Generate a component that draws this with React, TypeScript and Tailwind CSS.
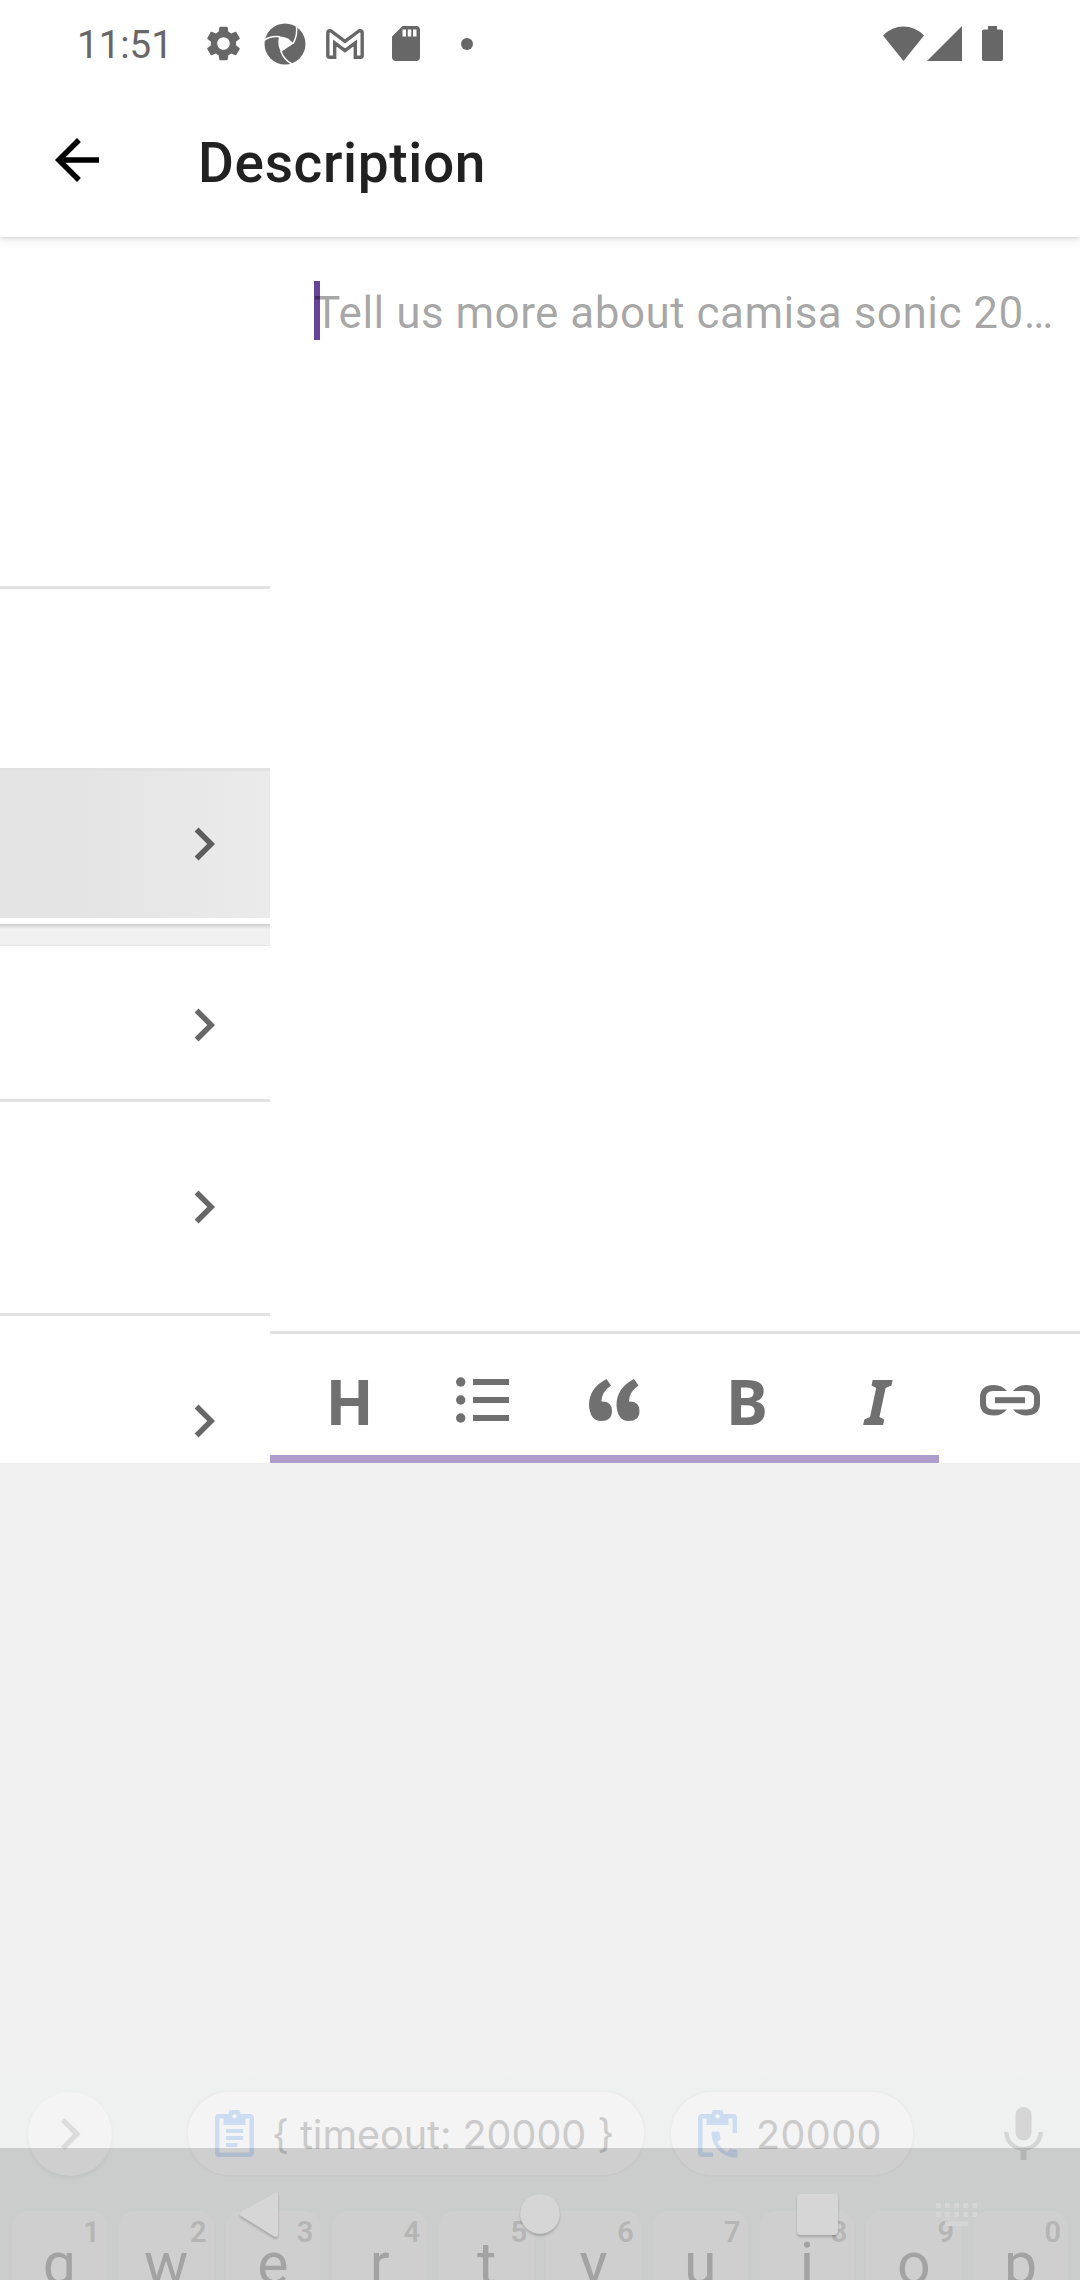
import type { ReactNode } from "react";

function Glyph({ box, className, children }: { box: string; className: string; children: ReactNode }) {
  return (
    <svg viewBox={box} className={`block shrink-0 fill-current ${className}`}>
      {children}
    </svg>
  );
}

function Chevron({ className }: { className: string }) {
  return (
    <Glyph box="0 0 24 24" className={className}>
      <path d="M10 6 8.59 7.41 13.17 12l-4.58 4.59L10 18l6-6z" />
    </Glyph>
  );
}

function StatusBar() {
  return (
    <div className="flex h-[87px] items-center pr-[77px] pl-[77px] text-[#676767]">
      <span className="w-[126px] pt-[3px] text-[38.5px] leading-none">11:51</span>
      <Glyph box="2 2 20 20" className="h-[35px] w-[41px]">
        <path d="M19.14 12.94c.04-.3.06-.61.06-.94 0-.32-.02-.64-.07-.94l2.03-1.58c.18-.14.23-.41.12-.61l-1.92-3.32c-.12-.22-.37-.29-.59-.22l-2.39.96c-.5-.38-1.03-.7-1.62-.94l-.36-2.54c-.04-.24-.24-.41-.48-.41h-3.84c-.24 0-.43.17-.47.41l-.36 2.54c-.59.24-1.13.57-1.62.94l-2.39-.96c-.22-.08-.47 0-.59.22L2.74 8.87c-.12.21-.08.47.12.61l2.03 1.58c-.05.3-.09.63-.09.94s.02.64.07.94l-2.03 1.58c-.18.14-.23.41-.12.61l1.92 3.32c.12.22.37.29.59.22l2.39-.96c.5.38 1.03.7 1.62.94l.36 2.54c.05.24.24.41.48.41h3.84c.24 0 .44-.17.47-.41l.36-2.54c.59-.24 1.13-.56 1.62-.94l2.39.96c.22.08.47 0 .59-.22l1.92-3.32c.12-.22.07-.47-.12-.61l-2.01-1.58zM12 15.6c-1.98 0-3.6-1.62-3.6-3.6s1.62-3.6 3.6-3.6 3.6 1.62 3.6 3.6-1.62 3.6-3.6 3.6z" />
      </Glyph>
      <Glyph box="0 0 42 42" className="ml-5 h-[42px] w-[42px]">
        <circle cx="21" cy="21" r="20.5" />
        <path d="M15 13.500Q23.500 13 29.500 20.500L17 29Q13 22 15 13.500z" fill="white" />
        <path d="M0 17.500Q6 12.500 16 13.800M32.500 4Q33.500 13 29 20.500M16.800 28Q20 37 28 41" fill="none" stroke="white" strokeWidth="1.500" />
      </Glyph>
      <Glyph box="0 0 38 30" className="ml-5 h-[30px] w-[38px]">
        <path d="M1.800 4v22.500q0 1.700 1.700 1.700h5.200V14L19 21.700 29.300 14v14.200h5.200q1.700 0 1.700-1.700V4q0-2.200-2.200-2.200-1 0-1.800.7L19 12.400 5.800 2.500Q5 1.800 4 1.800 1.800 1.800 1.800 4z" fill="none" stroke="currentColor" strokeWidth="3.400" />
      </Glyph>
      <Glyph box="4 2 16 20" className="ml-[28px] h-[35px] w-[28px]">
        <path d="M18 2h-8L4.020 8 4 20c0 1.100.9 2 2 2h12c1.100 0 2-.9 2-2V4c0-1.100-.9-2-2-2zm-6 6h-2V4h2v4zm3 0h-2V4h2v4zm3 0h-2V4h2v4z" />
      </Glyph>
      <span className="ml-[41px] h-3 w-3 rounded-full bg-[#676767]" />
      <Glyph box="0 0 41 35" className="ml-auto h-[35px] w-[41px]">
        <path d="M0 9.500Q9 .5 20.500.5T41 9.500L20.500 35z" />
      </Glyph>
      <Glyph box="0 0 34 34" className="ml-[3px] h-[35px] w-[35px]">
        <path d="M34 0v34H0z" />
      </Glyph>
      <Glyph box="0 0 21 35" className="ml-5 h-[35px] w-[21px]">
        <path d="M6 0h9v3.500h4q2 0 2 2V33q0 2-2 2H2q-2 0-2-2V5.500q0-2 2-2h4z" />
      </Glyph>
    </div>
  );
}

const linkHalf = "M27 24.500Q22 30.500 14 30.500 0 30.500 0 18v-5.500Q0 0 14 0q8 0 13 6H13q-7 0-7 6.500V18q0 6.500 7 6.500z";

function Toolbar() {
  return (
    <div className="h-[132px] border-t-[3px] border-[#e0e0e0]">
      <div className="flex h-[121px] items-center pt-[11px] font-['Noto_Sans',sans-serif] text-[63px] leading-none font-bold text-[#707070]">
        <span className="flex w-[158px] justify-center pl-px">H</span>
        <span className="flex w-[108px] justify-center">
          <Glyph box="0 0 53 46" className="h-[46px] w-[53px]">
            <circle cx="4.700" cy="5" r="4.700" />
            <circle cx="4.700" cy="23" r="4.700" />
            <circle cx="4.700" cy="41" r="4.700" />
            <path d="M17 2h36v6H17zM17 20h36v6H17zM17 38h36v6H17z" />
          </Glyph>
        </span>
        <span className="flex w-[156px] justify-center">
          <Glyph box="0 0 51 42" className="h-[42px] w-[51px]">
            <path d="M17.500 0 22 6.500Q12.500 13 12.500 22.500 23 22 23 32q0 10-11 10T0 26Q0 9 17.500 0z" />
            <path d="M45 0 49.500 6.500Q40 13 40 22.500 50.500 22 50.500 32q0 10-11 10T27.500 26Q27.500 9 45 0z" />
          </Glyph>
        </span>
        <span className="flex w-[110px] justify-center">B</span>
        <span className="flex w-[152px] justify-center pr-[2px] italic">I</span>
        <span className="flex w-[111px] justify-center">
          <Glyph box="0 0 60 31" className="h-[31px] w-[60px]">
            <path d={linkHalf} />
            <path d={linkHalf} transform="translate(60 0) scale(-1 1)" />
            <path d="M15 12.200h30v6H15z" />
          </Glyph>
        </span>
      </div>
      <div className="h-2 w-[669px] bg-[#ae9dca]" />
    </div>
  );
}

function ClipboardIcon() {
  return (
    <Glyph box="0 0 39 47" className="h-[47px] w-[39px] text-[#cdddf1]">
      <path fillRule="evenodd" d="M4 4h9.500a6 6 0 0 1 12 0H35q4 0 4 4v35q0 4-4 4H4q-4 0-4-4V8q0-4 4-4zM4.500 8.500v34h30v-34h-4V15h-22V8.500zM19.500 4a2.200 2.200 0 1 0 .1 0zM11 19h17v4H11zM11 26h17v4H11zM11 33h11.500v4H11z" />
    </Glyph>
  );
}

function ClipboardCallIcon() {
  return (
    <Glyph box="0 0 40 48" className="h-12 w-10 text-[#cdddf1]">
      <path fillRule="evenodd" d="M4 4h9.500a6 6 0 0 1 12 0H35q4 0 4 4v15h-4.500V8.500h-4V15h-22V8.500h-4v34H15V47H4q-4 0-4-4V8q0-4 4-4zM19.500 4a2.200 2.200 0 1 0 .1 0z" />
      <path transform="translate(9.200 17.200) scale(1.450)" d="M20.010 15.380c-1.230 0-2.420-.2-3.530-.56-.35-.12-.74-.03-1.010.24l-1.570 1.970c-2.830-1.350-5.480-3.900-6.890-6.830l1.950-1.660c.27-.28.35-.67.24-1.020-.37-1.110-.56-2.300-.56-3.530 0-.54-.45-.99-.99-.99H4.190C3.650 3 3 3.240 3 3.990 3 13.280 10.730 21 20.010 21c.71 0 .99-.63.99-1.180v-3.450c0-.54-.45-.99-.99-.99z" />
    </Glyph>
  );
}

const keys = ["q", "w", "e", "r", "t", "y", "u", "i", "o", "p"];
const chip = "box-content flex h-[83px] shrink-0 items-center rounded-full border-2 border-[#ececec] bg-[#f4f4f4] text-[#cbcbcb]";

function Keyboard() {
  return (
    <div className="relative h-[212px] bg-linear-to-b from-[#f1f1f1] to-[#eef1f0] to-10%">
      <div className="flex h-[129px] items-center pt-[2px] pl-7 font-['Inter',sans-serif] text-[39.5px] leading-none">
        <div className="mr-[74px] flex h-[84px] w-[84px] shrink-0 items-center justify-center rounded-full bg-[#f4f4f4] text-[#dcdcdc] shadow-[0_2px_4px_#0000000d]">
          <Chevron className="h-16 w-16" />
        </div>
        <div className={`${chip} w-[456px]`}>
          <div className="ml-[27px]"><ClipboardIcon /></div>
          <span className="ml-[18px] pt-1 whitespace-pre">{"{ timeout: 20000 }"}</span>
        </div>
        <div className={`${chip} ml-[23px] w-[242px]`}>
          <div className="ml-[27px]"><ClipboardCallIcon /></div>
          <span className="ml-[18px] pt-1 tracking-[0.4px]">20000</span>
        </div>
        <Glyph box="0 0 39 53" className="ml-[89px] h-[53px] w-[39px] text-[#d5d5d5]">
          <path d="M11.500 8a8 8 0 0 1 16 0v17.500a8 8 0 0 1-16 0zM0 25h4.500a15 15 0 0 0 30 0H39Q37.500 41 22.500 43.500V53h-6v-9.500Q1.500 41 0 25z" />
        </Glyph>
      </div>
      <div className="mt-[14px] flex h-[69px] gap-3 overflow-hidden px-3">
        {keys.map((k, i) => (
          <div key={k} className="h-[120px] flex-1 rounded-t-2xl bg-[#f4f4f4] text-center">
            <div className="flex justify-end pt-[7px] pr-[7px] text-[29px] leading-none font-semibold text-[#d5d5d5]">
              {(i + 1) % 10}
            </div>
            <div className="-mt-[13px] text-[59px] leading-[60px] text-[#c0c0c0]">{k}</div>
          </div>
        ))}
      </div>
      <div className="absolute inset-x-0 bottom-0 h-[132px] bg-black/15" />
      <svg viewBox="0 0 1080 132" className="absolute inset-x-0 bottom-0 h-[132px] w-full fill-[#d6d6d6]">
        <g className="drop-shadow-[0_2px_1px_#00000033]">
          <path d="M274 45.500Q278 43 278 47v39q0 4-4 2.500L241 68q-3-2 0-4z" />
          <circle cx="540" cy="66" r="19.800" />
          <rect x="797" y="46" width="41" height="41" rx="4" />
        </g>
        {[936, 945, 954.2, 963.4, 972.5].map((x) => (
          <path key={x} d={`M${x} 55h4.800v5h-4.800zM${x} 64h4.800v5h-4.800z`} />
        ))}
        <path d="M945 73.500h23v4.500h-23z" />
      </svg>
    </div>
  );
}

export default function App() {
  return (
    <div className="flex h-[2280px] w-[1080px] flex-col overflow-hidden bg-[#f1f1f1] font-['Roboto',sans-serif]">
      <header className="relative z-10 h-[237px] shrink-0 bg-white shadow-[0_1px_3px_#0000001f,0_4px_10px_#00000014]">
        <StatusBar />
        <div className="flex h-[150px] items-center pb-[4px] pl-11">
          <Glyph box="0 0 24 24" className="h-[66px] w-[66px] text-black">
            <path d="M20 11H7.830l5.590-5.590L12 4l-8 8 8 8 1.410-1.410L7.830 13H20v-2z" />
          </Glyph>
          <h1 className="ml-[88px] pt-[6px] text-[55px] leading-none font-medium tracking-[0.65px] text-[#212121]">Description</h1>
        </div>
      </header>
      <main className="flex h-[1226px] shrink-0 overflow-hidden bg-white">
        <aside className="flex w-[270px] shrink-0 flex-col text-[#676767]">
          <div className="h-[352px] shrink-0 border-b-[3px] border-[#e2e2e2]" />
          <div className="h-[182px] shrink-0 border-b-[3px] border-[#e2e2e2]" />
          <div className="flex h-[147px] shrink-0 items-center bg-linear-to-r from-[#e4e4e4] from-30% to-[#ebebeb] pb-px pl-[171px] text-[#5d5d5d]">
            <Chevron className="h-[66px] w-[66px]" />
          </div>
          <div className="mt-[6px] h-[22px] shrink-0 border-b border-[#e6e6e6] bg-linear-to-b from-[#cdcdcd] to-[#f1f1f1] to-[5px]" />
          <div className="flex h-[156px] shrink-0 items-center border-b-[3px] border-[#e2e2e2] pt-[5px] pl-[171px]">
            <Chevron className="h-[66px] w-[66px]" />
          </div>
          <div className="flex h-[214px] shrink-0 items-center border-b-[3px] border-[#e2e2e2] pb-[2px] pl-[171px]">
            <Chevron className="h-[66px] w-[66px]" />
          </div>
          <div className="h-[147px] shrink-0 pt-[72px] pl-[171px]">
            <Chevron className="h-[66px] w-[66px]" />
          </div>
        </aside>
        <section className="flex flex-1 flex-col">
          <div className="h-[1094px] pt-11 pl-11">
            <div className="relative flex h-[59px] items-center">
              <span className="h-[59px] w-[6px] bg-[#67419a]" />
              <span className="-ml-[6px] pt-1 text-[44px] leading-none tracking-[0.48px] whitespace-nowrap text-black/36">
                Tell us more about camisa sonic 20…
              </span>
            </div>
          </div>
          <Toolbar />
        </section>
      </main>
      <div className="h-[605px] shrink-0" />
      <Keyboard />
    </div>
  );
}
